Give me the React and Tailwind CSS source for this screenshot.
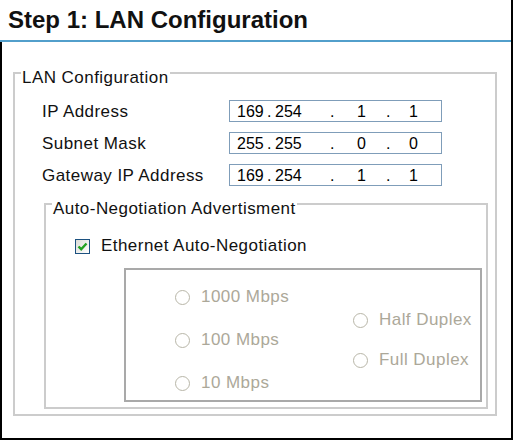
import React from 'react';

const Octets = ({ parts }) => (
  <div className="flex h-full items-center pl-[7px] text-[16px] leading-[19px] tracking-normal text-black">
    <span className="w-[30px]">{parts[0]}</span>
    <span className="w-[8px]">.</span>
    <span className="w-[55px]">{parts[1]}</span>
    <span className="w-[27px]">.</span>
    <span className="w-[29px]">{parts[2]}</span>
    <span className="w-[23px]">.</span>
    <span>{parts[3]}</span>
  </div>
);

const FieldRow = ({ label, value }) => (
  <div className="flex h-[22px] items-center">
    <span className="w-[187px] pt-[2px] leading-[20px]">{label}</span>
    <div className="w-[213px] h-[22px] border border-[#7f9db9] bg-white">
      <Octets parts={value.split('.')} />
    </div>
  </div>
);

const Radio = ({ label }) => (
  <div className="flex h-[20px] items-center gap-[11px] text-[#aca899]">
    <span className="block shrink-0 w-[15px] h-[15px] rounded-full border-[1.5px] border-[#b8b6a8] bg-white" />
    <span className="leading-[20px]">{label}</span>
  </div>
);

export default function App() {
  return (
    <div className="w-[513px] h-[440px] bg-white border-r-2 border-black flex flex-col font-['Liberation_Sans',Arial,sans-serif] text-[17px] leading-[20px] tracking-[0.45px] text-[#111]">
      {/* header */}
      <div className="h-[42px] shrink-0 border-b-2 border-[#529fcb] pl-[8px] text-[24px] font-bold leading-[40px] tracking-normal">
        Step 1: LAN Configuration
      </div>

      <div className="flex-1 border-l-2 border-b-2 border-black flex flex-col">
        <fieldset className="mt-[16px] ml-[11px] mr-[14px] border-2 border-[#cccccc]">
          <legend className="ml-[6px] px-[1px] pt-[10px] leading-[20px]">LAN Configuration</legend>

          <div className="mt-[12px] ml-[27px] flex flex-col gap-[10px]">
            <FieldRow label="IP Address" value="169.254.1.1" />
            <FieldRow label="Subnet Mask" value="255.255.0.0" />
            <FieldRow label="Gateway IP Address" value="169.254.1.1" />
          </div>

          <fieldset className="mt-[3px] ml-[29px] mr-[7px] mb-[5px] border-2 border-[#cccccc]">
            <legend className="ml-[6px] px-[1px] pt-[10px] leading-[20px]">Auto-Negotiation Advertisment</legend>

            <div className="mt-[17px] ml-[29px] flex h-[20px] items-center gap-[11px]">
              <span className="flex shrink-0 w-[15px] h-[15px] items-center justify-center border border-[#1c5180] bg-gradient-to-br from-[#dcdcd7] to-white">
                <svg width="11" height="11" viewBox="0 0 11 11">
                  <path d="M1.5 5.5 L4.2 8.2 L9.5 2.5" fill="none" stroke="#21a121" strokeWidth="2.4" />
                </svg>
              </span>
              <span>Ethernet Auto-Negotiation</span>
            </div>

            <div className="mt-[12px] ml-[78px] mr-[4px] mb-[5px] h-[134px] border-2 border-[#a9a9a9] flex">
              <div className="w-[227px] pl-[49px] pt-[17px] flex flex-col gap-[23px]">
                <Radio label="1000 Mbps" />
                <Radio label="100 Mbps" />
                <Radio label="10 Mbps" />
              </div>
              <div className="pt-[40px] flex flex-col gap-[20px]">
                <Radio label="Half Duplex" />
                <Radio label="Full Duplex" />
              </div>
            </div>
          </fieldset>
        </fieldset>
      </div>
    </div>
  );
}
